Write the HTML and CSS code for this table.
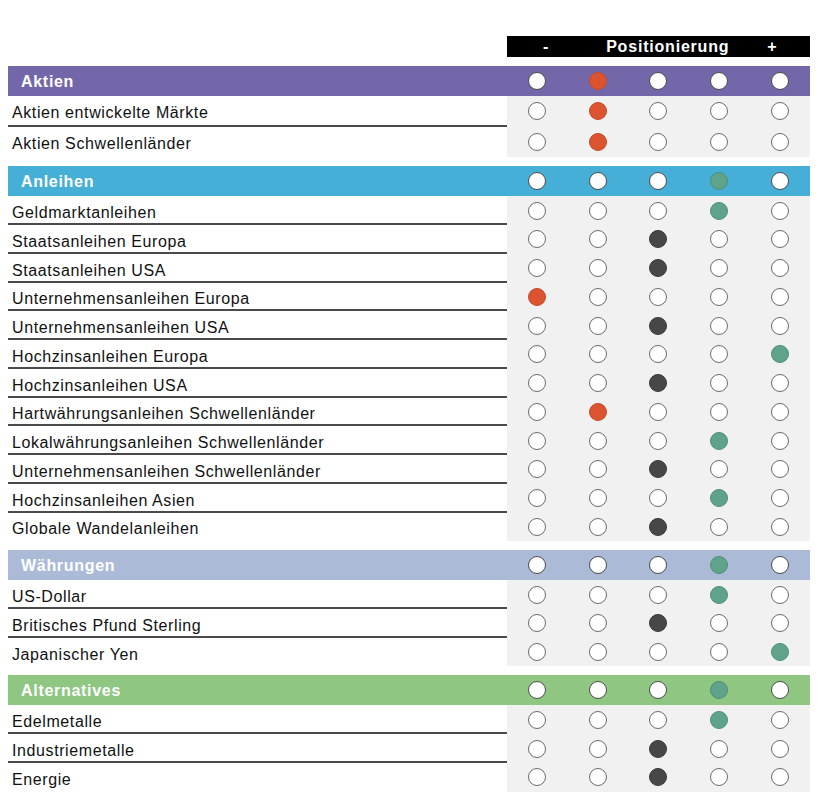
FILE: index.html
```html
<!DOCTYPE html>
<html lang="de">
<head>
<meta charset="utf-8">
<title>Positionierung</title>
<link rel="stylesheet" href="styles.css">
</head>
<body>
<div class="wrap">
  <div class="topbar">
    <div class="pos"><span class="minus">-</span><span class="title">Positionierung</span><span class="plus">+</span></div>
  </div>

  <section class="sec aktien">
    <div class="head"><div class="hlabel">Aktien</div><div class="dots"><span class="dot"></span><span class="dot o"></span><span class="dot"></span><span class="dot"></span><span class="dot"></span></div></div>
    <div class="row"><div class="label">Aktien entwickelte Märkte</div><div class="dots"><span class="dot"></span><span class="dot o"></span><span class="dot"></span><span class="dot"></span><span class="dot"></span></div></div>
    <div class="row"><div class="label">Aktien Schwellenländer</div><div class="dots"><span class="dot"></span><span class="dot o"></span><span class="dot"></span><span class="dot"></span><span class="dot"></span></div></div>
  </section>

  <section class="sec anleihen">
    <div class="head"><div class="hlabel">Anleihen</div><div class="dots"><span class="dot"></span><span class="dot"></span><span class="dot"></span><span class="dot g"></span><span class="dot"></span></div></div>
    <div class="row"><div class="label">Geldmarktanleihen</div><div class="dots"><span class="dot"></span><span class="dot"></span><span class="dot"></span><span class="dot g"></span><span class="dot"></span></div></div>
    <div class="row"><div class="label">Staatsanleihen Europa</div><div class="dots"><span class="dot"></span><span class="dot"></span><span class="dot d"></span><span class="dot"></span><span class="dot"></span></div></div>
    <div class="row"><div class="label">Staatsanleihen USA</div><div class="dots"><span class="dot"></span><span class="dot"></span><span class="dot d"></span><span class="dot"></span><span class="dot"></span></div></div>
    <div class="row"><div class="label">Unternehmensanleihen Europa</div><div class="dots"><span class="dot o"></span><span class="dot"></span><span class="dot"></span><span class="dot"></span><span class="dot"></span></div></div>
    <div class="row"><div class="label">Unternehmensanleihen USA</div><div class="dots"><span class="dot"></span><span class="dot"></span><span class="dot d"></span><span class="dot"></span><span class="dot"></span></div></div>
    <div class="row"><div class="label">Hochzinsanleihen Europa</div><div class="dots"><span class="dot"></span><span class="dot"></span><span class="dot"></span><span class="dot"></span><span class="dot g"></span></div></div>
    <div class="row"><div class="label">Hochzinsanleihen USA</div><div class="dots"><span class="dot"></span><span class="dot"></span><span class="dot d"></span><span class="dot"></span><span class="dot"></span></div></div>
    <div class="row"><div class="label">Hartwährungsanleihen Schwellenländer</div><div class="dots"><span class="dot"></span><span class="dot o"></span><span class="dot"></span><span class="dot"></span><span class="dot"></span></div></div>
    <div class="row"><div class="label">Lokalwährungsanleihen Schwellenländer</div><div class="dots"><span class="dot"></span><span class="dot"></span><span class="dot"></span><span class="dot g"></span><span class="dot"></span></div></div>
    <div class="row"><div class="label">Unternehmensanleihen Schwellenländer</div><div class="dots"><span class="dot"></span><span class="dot"></span><span class="dot d"></span><span class="dot"></span><span class="dot"></span></div></div>
    <div class="row"><div class="label">Hochzinsanleihen Asien</div><div class="dots"><span class="dot"></span><span class="dot"></span><span class="dot"></span><span class="dot g"></span><span class="dot"></span></div></div>
    <div class="row"><div class="label">Globale Wandelanleihen</div><div class="dots"><span class="dot"></span><span class="dot"></span><span class="dot d"></span><span class="dot"></span><span class="dot"></span></div></div>
  </section>

  <section class="sec waehrungen">
    <div class="head"><div class="hlabel">Währungen</div><div class="dots"><span class="dot"></span><span class="dot"></span><span class="dot"></span><span class="dot g"></span><span class="dot"></span></div></div>
    <div class="row"><div class="label">US-Dollar</div><div class="dots"><span class="dot"></span><span class="dot"></span><span class="dot"></span><span class="dot g"></span><span class="dot"></span></div></div>
    <div class="row"><div class="label">Britisches Pfund Sterling</div><div class="dots"><span class="dot"></span><span class="dot"></span><span class="dot d"></span><span class="dot"></span><span class="dot"></span></div></div>
    <div class="row"><div class="label">Japanischer Yen</div><div class="dots"><span class="dot"></span><span class="dot"></span><span class="dot"></span><span class="dot"></span><span class="dot g"></span></div></div>
  </section>

  <section class="sec alternatives">
    <div class="head"><div class="hlabel">Alternatives</div><div class="dots"><span class="dot"></span><span class="dot"></span><span class="dot"></span><span class="dot g"></span><span class="dot"></span></div></div>
    <div class="row"><div class="label">Edelmetalle</div><div class="dots"><span class="dot"></span><span class="dot"></span><span class="dot"></span><span class="dot g"></span><span class="dot"></span></div></div>
    <div class="row"><div class="label">Industriemetalle</div><div class="dots"><span class="dot"></span><span class="dot"></span><span class="dot d"></span><span class="dot"></span><span class="dot"></span></div></div>
    <div class="row"><div class="label">Energie</div><div class="dots"><span class="dot"></span><span class="dot"></span><span class="dot d"></span><span class="dot"></span><span class="dot"></span></div></div>
  </section>
</div>
</body>
</html>
```
FILE: styles.css
```css
* { box-sizing: border-box; }

html, body {
  margin: 0;
  padding: 0;
  background: #ffffff;
}

body {
  font-family: "Liberation Sans", Arial, sans-serif;
  color: #111111;
}

.wrap {
  width: 802px;
  margin: 36px 0 0 8px;
}

.topbar {
  display: flex;
  justify-content: flex-end;
}

.pos {
  width: 303px;
  height: 21px;
  background: #000000;
  color: #ffffff;
  font-weight: bold;
  font-size: 16px;
  letter-spacing: 0.8px;
  display: flex;
  align-items: center;
  padding-left: 36px;
  line-height: 21px;
}

.pos .title {
  margin-left: 57px;
}

.pos .plus {
  margin-left: 38px;
}

.sec {
  margin-top: 8.5px;
}

.head,
.row {
  display: grid;
  grid-template-columns: 499px 303px;
}

.head {
  height: 30.5px;
}

.aktien .head { background: #7467a9; }
.anleihen .head { background: #45afd8; }
.waehrungen .head { background: #aabad7; }
.alternatives .head { background: #8ec682; }

.hlabel {
  color: #ffffff;
  font-weight: bold;
  font-size: 16px;
  letter-spacing: 0.7px;
  line-height: 31px;
  padding-left: 13px;
}

.row {
  height: 28.75px;
}

.aktien .row {
  height: 30.5px;
}

.label {
  font-size: 16px;
  letter-spacing: 0.6px;
  padding-left: 4px;
  padding-top: 7px;
  line-height: 20px;
  border-bottom: 2px solid #4a4a4a;
  white-space: nowrap;
}

.row:last-child .label {
  border-bottom: none;
}

.dots {
  display: grid;
  grid-template-columns: repeat(5, 1fr);
  align-items: center;
  justify-items: center;
}

.row .dots {
  background: #f1f1f1;
}

.dot {
  display: block;
  width: 18px;
  height: 18px;
  border-radius: 50%;
  background: #ffffff;
  border: 1px solid #6b6b6b;
}

.head .dot {
  border-color: #4a4a4a;
}

.dot.o {
  background: #dc532f;
  border-color: #c54a2a;
}

.dot.g {
  background: #5fa48a;
  border-color: #4f8f77;
}

.dot.d {
  background: #474747;
  border-color: #3a3a3a;
}
```
